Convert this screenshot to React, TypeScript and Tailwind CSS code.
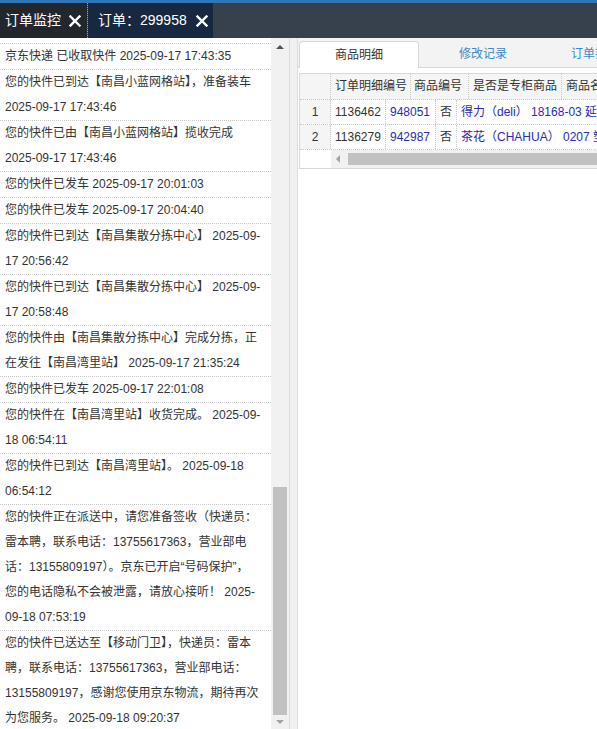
import React from 'react';

const logs: string[] = [
  '京东快递 已收取快件 2025-09-17 17:43:35',
  '您的快件已到达【南昌小蓝网格站】，准备装车 2025-09-17 17:43:46',
  '您的快件已由【南昌小蓝网格站】揽收完成 2025-09-17 17:43:46',
  '您的快件已发车 2025-09-17 20:01:03',
  '您的快件已发车 2025-09-17 20:04:40',
  '您的快件已到达【南昌集散分拣中心】 2025-09-17 20:56:42',
  '您的快件已到达【南昌集散分拣中心】 2025-09-17 20:58:48',
  '您的快件由【南昌集散分拣中心】完成分拣，正在发往【南昌湾里站】 2025-09-17 21:35:24',
  '您的快件已发车 2025-09-17 22:01:08',
  '您的快件在【南昌湾里站】收货完成。 2025-09-18 06:54:11',
  '您的快件已到达【南昌湾里站】。 2025-09-18 06:54:12',
  '您的快件正在派送中，请您准备签收（快递员：雷本聘，联系电话：13755617363，营业部电话：13155809197）。京东已开启“号码保护”，\n您的电话隐私不会被泄露，请放心接听！ 2025-09-18 07:53:19',
  '您的快件已送达至【移动门卫】，快递员：雷本聘，联系电话：13755617363，营业部电话：13155809197，感谢您使用京东物流，期待再次为您服务。 2025-09-18 09:20:37',
];

const rows = [
  { no: 1, id: '1136462', code: '948051', special: '否', name: '得力（deli） 18168-03 延长线插座 3米' },
  { no: 2, id: '1136279', code: '942987', special: '否', name: '茶花（CHAHUA） 0207 塑料收纳箱' },
];

function CloseX() {
  return (
    <svg width="12" height="12" viewBox="0 0 12 12" className="shrink-0">
      <path d="M1.5 1.5 L10.5 10.5 M10.5 1.5 L1.5 10.5" stroke="#fff" strokeWidth="2.4" strokeLinecap="square" />
    </svg>
  );
}

function Arrow({ dir, color }: { dir: 'up' | 'down' | 'left'; color: string }) {
  const d = dir === 'up' ? 'M0 5 L4 1 L8 5 Z' : dir === 'down' ? 'M0 1 L8 1 L4 5 Z' : 'M5 0 L5 8 L1 4 Z';
  return (
    <svg width="8" height={dir === 'left' ? 8 : 6} viewBox={dir === 'left' ? '0 0 8 8' : '0 0 8 6'}>
      <path d={d} fill={color} />
    </svg>
  );
}

export default function App() {
  return (
    <div className="w-[597px] h-[729px] overflow-hidden flex flex-col bg-white text-[12px] text-[#333] font-['Liberation_Sans','Noto_Sans_CJK_SC',sans-serif]">
      {/* top strip */}
      <div className="h-[3px] bg-[#3275b5] shrink-0" />

      {/* page tabs */}
      <div className="h-[35px] shrink-0 flex bg-[#36414d] text-white text-[14px]">
        <div className="w-[87px] bg-[#22272e] flex items-center pl-[5px] gap-[8px]">
          <span>订单监控</span>
          <CloseX />
        </div>
        <div className="w-px border-l border-dotted border-[#9aa3ad]" />
        <div className="w-[125px] bg-[#172840] flex items-center pl-[10px] gap-[9px]">
          <span>订单：299958</span>
          <CloseX />
        </div>
      </div>

      <div className="flex flex-1 min-h-0">
        {/* left: logistics log */}
        <div className="w-[289px] flex shrink-0">
          <div className="w-[271px] overflow-hidden">
            <div className="h-[6px] border-b border-dotted border-[#c8c8c8]" />
            {logs.map((t, i) => (
              <div key={i} className="pl-[5px] pr-[9px] leading-[25px] whitespace-pre-line border-b border-dotted border-[#c8c8c8]">
                {t}
              </div>
            ))}
          </div>
          <div className="w-[18px] bg-[#f1f1f1] flex flex-col items-center">
            <div className="h-[18px] flex items-center justify-center">
              <Arrow dir="up" color="#505050" />
            </div>
            <div className="flex-1 w-full flex flex-col justify-end px-[2px]">
              <div className="h-[228px] bg-[#c1c1c1]" />
            </div>
            <div className="h-[14px] flex items-center justify-center">
              <Arrow dir="down" color="#a3a3a3" />
            </div>
          </div>
        </div>

        {/* splitter */}
        <div className="w-[9px] shrink-0 bg-[#f0f0f0] border-l border-r border-[#dcdcdc]" />

        {/* right panel */}
        <div className="flex-1 min-w-0 overflow-hidden bg-white">
          <div className="h-[30px] bg-[#f3f3f3] flex items-end gap-[4px] pl-px border-b border-[#d8d8d8]">
            <div className="w-[120px] h-[27px] shrink-0 -mb-px bg-white border border-b-0 border-[#d8d8d8] rounded-t-[4px] flex items-center justify-center">
              商品明细
            </div>
            <div className="w-[120px] h-[27px] shrink-0 flex items-center justify-center text-[#3a8bc6]">修改记录</div>
            <div className="w-[120px] h-[27px] shrink-0 flex items-center justify-center text-[#3a8bc6] whitespace-nowrap">订单操作日志</div>
          </div>

          <div className="mt-[5px] ml-px w-[360px] border border-[#d8d8d8] whitespace-nowrap">
            {/* header */}
            <div className="h-[26px] flex bg-[#f5f5f5] border-b border-dotted border-[#c8c8c8]">
              <div className="w-[31px] shrink-0 border-r border-dotted border-[#c8c8c8]" />
              <div className="w-[80px] shrink-0 pl-[4px] leading-[25px] border-r border-dotted border-[#c8c8c8]">订单明细编号</div>
              <div className="w-[58px] shrink-0 pl-[3px] leading-[25px] border-r border-dotted border-[#c8c8c8]">商品编号</div>
              <div className="w-[93px] shrink-0 pl-[4px] leading-[25px] border-r border-dotted border-[#c8c8c8]">是否是专柜商品</div>
              <div className="shrink-0 pl-[4px] leading-[25px]">商品名称</div>
            </div>
            {/* body */}
            {rows.map((r) => (
              <div key={r.no} className="h-[25px] flex border-b border-dotted border-[#c8c8c8]">
                <div className="w-[31px] shrink-0 bg-[#f5f5f5] text-center leading-[24px] border-r border-dotted border-[#c8c8c8]">{r.no}</div>
                <div className="w-[55px] shrink-0 pl-[4px] leading-[24px] border-r border-dotted border-[#c8c8c8]">{r.id}</div>
                <div className="w-[50px] shrink-0 pl-[4px] leading-[24px] text-[#2b2bb0] border-r border-dotted border-[#c8c8c8]">{r.code}</div>
                <div className="w-[21px] shrink-0 text-center leading-[24px] border-r border-dotted border-[#c8c8c8]">{r.special}</div>
                <div className="shrink-0 pl-[4px] leading-[24px] text-[#2b2bb0]">{r.name}</div>
              </div>
            ))}
            {/* horizontal scrollbar */}
            <div className="h-[18px] flex">
              <div className="w-[31px] shrink-0 bg-white" />
              <div className="flex-1 bg-[#f1f1f1] flex items-center">
                <div className="w-[15px] flex items-center justify-center">
                  <Arrow dir="left" color="#a3a3a3" />
                </div>
                <div className="ml-[2px] flex-1 h-[12px] bg-[#c1c1c1]" />
              </div>
            </div>
          </div>
        </div>
      </div>
    </div>
  );
}
